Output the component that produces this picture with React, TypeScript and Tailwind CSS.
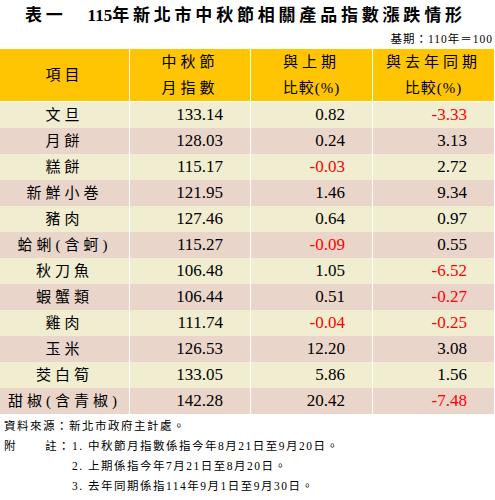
const rows = [
  { name: "文旦", idx: "133.14", prev: "0.82", year: "-3.33" },
  { name: "月餅", idx: "128.03", prev: "0.24", year: "3.13" },
  { name: "糕餅", idx: "115.17", prev: "-0.03", year: "2.72" },
  { name: "新鮮小巻", idx: "121.95", prev: "1.46", year: "9.34" },
  { name: "豬肉", idx: "127.46", prev: "0.64", year: "0.97" },
  { name: "蛤蜊(含蚵)", idx: "115.27", prev: "-0.09", year: "0.55" },
  { name: "秋刀魚", idx: "106.48", prev: "1.05", year: "-6.52" },
  { name: "蝦蟹類", idx: "106.44", prev: "0.51", year: "-0.27" },
  { name: "雞肉", idx: "111.74", prev: "-0.04", year: "-0.25" },
  { name: "玉米", idx: "126.53", prev: "12.20", year: "3.08" },
  { name: "茭白筍", idx: "133.05", prev: "5.86", year: "1.56" },
  { name: "甜椒(含青椒)", idx: "142.28", prev: "20.42", year: "-7.48" },
];

const cjk = "font-['Liberation_Serif','Noto_Sans_CJK_TC',serif]";

function Num({ v }: { v: string }) {
  return (
    <div className={`flex items-center justify-end pr-[27px] text-[17px] ${v.startsWith("-") ? "text-[#ff0000]" : "text-black"}`}>
      {v}
    </div>
  );
}

export default function App() {
  return (
    <div className={`w-[495px] h-[500px] bg-white ${cjk} text-black`}>
      {/* 標題 */}
      <h1 className="pt-[5px] pl-[25px] text-[17px] font-bold leading-[22px] tracking-[3.8px] whitespace-nowrap">
        表一<span className="inline-block w-[21px]" />
        <span className="tracking-normal">115</span>年新北市中秋節相關產品指數漲跌情形
      </h1>
      <p className="mt-[4px] pr-[2px] text-right text-[11.5px] leading-[16px] tracking-[1px]">基期：110年＝100</p>

      {/* 表格 */}
      <div className="mt-[2px] w-[494px] flex flex-col gap-px bg-white">
        <div className="grid grid-cols-[129px_120px_121px_121px] gap-px h-[52px] text-[15px] leading-[26px] tracking-[4px]">
          <div className="bg-[#ffc503] flex items-center justify-center">項目</div>
          <div className="bg-[#ffc503] flex flex-col items-center justify-center">
            <span>中秋節</span>
            <span>月指數</span>
          </div>
          <div className="bg-[#ffc503] flex flex-col items-center justify-center">
            <span>與上期</span>
            <span className="tracking-[1px]">比較(%)</span>
          </div>
          <div className="bg-[#ffc503] flex flex-col items-center justify-center">
            <span>與去年同期</span>
            <span className="tracking-[1px]">比較(%)</span>
          </div>
        </div>
        {rows.map((r, i) => (
          <div
            key={r.name}
            className={`grid grid-cols-[129px_120px_121px_121px] gap-px h-[25px] ${i % 2 === 0 ? "[&>div]:bg-[#f0edd0]" : "[&>div]:bg-[#ead5ca]"}`}
          >
            <div className="flex items-center justify-center text-[15px] tracking-[4px] whitespace-nowrap">{r.name}</div>
            <Num v={r.idx} />
            <Num v={r.prev} />
            <Num v={r.year} />
          </div>
        ))}
      </div>

      {/* 附註 */}
      <div className="mt-[3px] pl-[4px] text-[11.5px] leading-[20px] tracking-[1.5px]">
        <p>資料來源：新北市政府主計處。</p>
        <div className="flex">
          <span className="w-[68px] flex justify-between pr-px">
            <span>附</span>
            <span>註：</span>
          </span>
          <div>
            <p>1. 中秋節月指數係指今年8月21日至9月20日。</p>
            <p>2. 上期係指今年7月21日至8月20日。</p>
            <p>3. 去年同期係指114年9月1日至9月30日。</p>
          </div>
        </div>
      </div>
    </div>
  );
}
